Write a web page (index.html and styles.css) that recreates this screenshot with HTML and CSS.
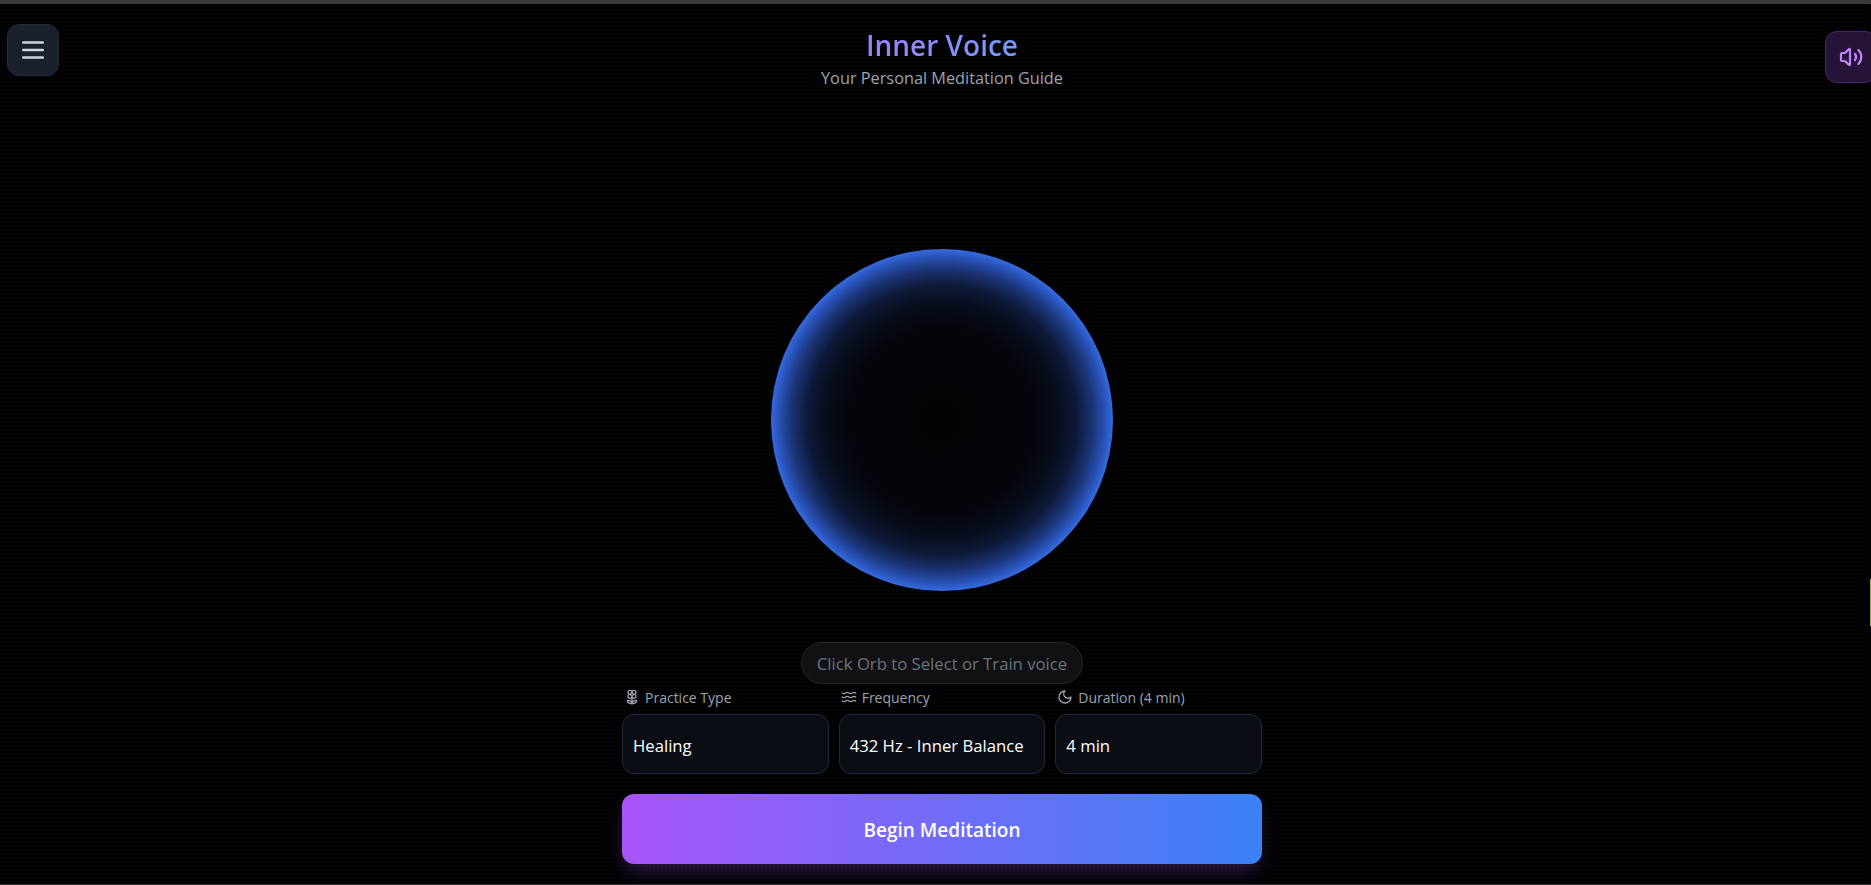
FILE: index.html
```html
<!DOCTYPE html>
<html lang="en">
<head>
<meta charset="utf-8">
<title>Inner Voice</title>
<link rel="stylesheet" href="styles.css">
</head>
<body>
<div class="chrome-top"></div>
<button class="icon-btn menu-btn" aria-label="Menu">
  <svg width="24" height="24" viewBox="0 0 24 24" fill="none" stroke="#d1d5db" stroke-width="2.500" stroke-linecap="round"><path d="M2.250 4.500h19.500M2.250 12h19.500M2.250 19.500h19.500"/></svg>
</button>
<button class="icon-btn sound-btn" aria-label="Sound">
  <svg width="24" height="24" viewBox="0 0 24 24" fill="none" stroke="#c084fc" stroke-width="2.200" stroke-linecap="round" stroke-linejoin="round"><path d="M11 4.700a.7.7 0 0 0-1.200-.5L6.400 7.600A1.400 1.400 0 0 1 5.400 8H3a1 1 0 0 0-1 1v6a1 1 0 0 0 1 1h2.400a1.400 1.400 0 0 1 1 .4l3.400 3.400a.7.7 0 0 0 1.200-.5z"/><path d="M16 9a5 5 0 0 1 0 6"/><path d="M19.400 5a10 10 0 0 1 0 14"/></svg>
</button>
<main class="page">
  <header class="head">
    <h1 class="title">Inner Voice</h1>
    <p class="subtitle">Your Personal Meditation Guide</p>
  </header>
  <div class="orb"></div>
  <div class="hint">Click Orb to Select or Train voice</div>
  <section class="controls">
    <div class="field">
      <label class="label">
        <svg class="lbl-icon" viewBox="0 0 24 24" fill="none" stroke="currentColor" stroke-width="2" stroke-linecap="round" stroke-linejoin="round"><path d="M12 5a3 3 0 1 1 3 3m-3-3a3 3 0 1 0-3 3m3-3v1M9 8a3 3 0 1 0 3 3M9 8h1m5 0a3 3 0 1 1-3 3m3-3h-1m-2 3v-1"/><circle cx="12" cy="8" r="2"/><path d="M12 10v12"/><path d="M12 22c4.200 0 7-1.667 7-5-4.200 0-7 1.667-7 5Z"/><path d="M12 22c-4.200 0-7-1.667-7-5 4.200 0 7 1.667 7 5Z"/></svg>
        Practice Type
      </label>
      <select class="select"><option>Healing</option></select>
    </div>
    <div class="field">
      <label class="label">
        <svg class="lbl-icon" viewBox="0 0 24 24" fill="none" stroke="currentColor" stroke-width="2" stroke-linecap="round" stroke-linejoin="round"><path d="M2 6c.6.500 1.200 1 2.500 1C7 7 7 5 9.500 5c2.600 0 2.400 2 5 2 2.500 0 2.500-2 5-2 1.300 0 1.900.500 2.500 1"/><path d="M2 12c.6.500 1.200 1 2.500 1 2.500 0 2.500-2 5-2 2.600 0 2.400 2 5 2 2.500 0 2.500-2 5-2 1.300 0 1.900.500 2.500 1"/><path d="M2 18c.6.500 1.200 1 2.500 1 2.500 0 2.500-2 5-2 2.600 0 2.400 2 5 2 2.500 0 2.500-2 5-2 1.300 0 1.900.500 2.500 1"/></svg>
        Frequency
      </label>
      <select class="select"><option>432 Hz - Inner Balance</option></select>
    </div>
    <div class="field">
      <label class="label">
        <svg class="lbl-icon" viewBox="0 0 24 24" fill="none" stroke="currentColor" stroke-width="2" stroke-linecap="round" stroke-linejoin="round"><path d="M12 3a6 6 0 0 0 9 9 9 9 0 1 1-9-9Z"/></svg>
        Duration (4 min)
      </label>
      <select class="select"><option>4 min</option></select>
    </div>
  </section>
  <button class="begin">Begin Meditation</button>
</main>
<div class="edge-mark"></div>
<div class="chrome-bottom"></div>
</body>
</html>
```

FILE: styles.css
```css
* { box-sizing: border-box; }
html, body { margin: 0; height: 100%; overflow: hidden; }
body {
  background-color: #010102;
  background-image: radial-gradient(rgba(70, 70, 130, 0.05) 1px, transparent 1px);
  background-size: 4px 4px;
  color: #fff;
  font-family: "Open Sans", "Noto Sans", "Liberation Sans", sans-serif;
  position: relative;
}
.chrome-top { height: 4px; background: #3b3b3b; }
.chrome-bottom { position: absolute; left: 0; right: 0; bottom: 0; height: 1px; background: #333; }
.edge-mark { position: absolute; right: 0; top: 579px; width: 1px; height: 47px; background: #9ab35a; }
.icon-btn {
  position: absolute;
  width: 52px;
  height: 52px;
  border-radius: 12px;
  display: flex;
  align-items: center;
  justify-content: center;
  padding: 0;
}
.menu-btn { left: 7px; top: 24px; background: #1a202c; border: 1px solid #252c3a; }
.sound-btn { left: 1825px; top: 31px; background: #261338; border: 1px solid #4a2674; }
.page {
  display: flex;
  flex-direction: column;
  align-items: center;
  width: 640px;
  margin-left: 622px;
}
.head { text-align: center; padding-top: 23px; }
.title {
  margin: 0;
  font-size: 28px;
  line-height: 36px;
  font-weight: 600;
  background: linear-gradient(90deg, #a97bf7, #6aa0fb);
  -webkit-background-clip: text;
  background-clip: text;
  color: transparent;
}
.subtitle { margin: 3px 0 0; font-size: 16.300px; line-height: 24px; color: #9ca3af; }
.orb {
  margin-top: 159px;
  width: 342px;
  height: 342px;
  border-radius: 50%;
  background: radial-gradient(circle closest-side, #030305 0%, #05060c 55%, #080d1c 68%, #0e1a3a 79%, #1a3474 88%, #2a55bd 96%, #356bde 100%);
}
.hint {
  margin-top: 51px;
  height: 42px;
  width: 282px;
  border-radius: 21px;
  border: 1px solid #26262a;
  background: #111113;
  color: #6b7280;
  font-size: 16.700px;
  display: flex;
  align-items: center;
  justify-content: center;
  white-space: nowrap;
}
.controls {
  margin-top: 2px;
  width: 100%;
  display: grid;
  grid-template-columns: repeat(3, 1fr);
  gap: 10px;
}
.label {
  display: flex;
  align-items: center;
  gap: 5px;
  height: 28px;
  padding: 0 0 6px 2px;
  font-size: 14px;
  color: #9ca3af;
}
.lbl-icon { width: 16px; height: 16px; flex: none; }
.select {
  display: block;
  width: 100%;
  height: 60px;
  appearance: none;
  border: 1px solid #1f2937;
  border-radius: 12px;
  background: #0a0d14;
  color: #fff;
  font: inherit;
  font-size: 16.700px;
  padding: 2px 10px 0;
}
.begin {
  margin-top: 20px;
  width: 100%;
  height: 70px;
  border: 0;
  border-radius: 12px;
  background: linear-gradient(90deg, #a855f7, #3b82f6);
  color: #fff;
  font: inherit;
  font-size: 19px;
  font-weight: 600;
  padding: 2px 0 0;
  box-shadow: 0 10px 20px -4px rgba(168, 85, 247, 0.3);
}
```
